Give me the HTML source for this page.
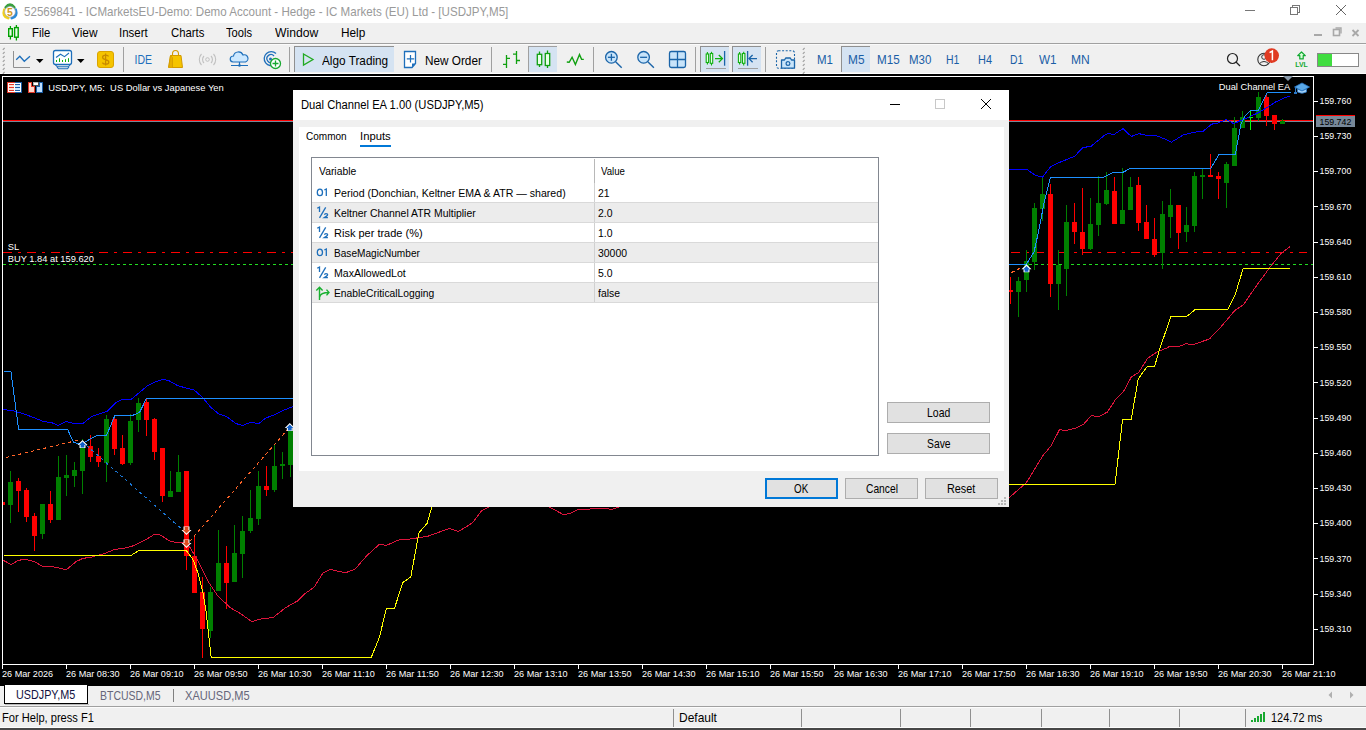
<!DOCTYPE html>
<html><head><meta charset="utf-8"><title>MT5</title>
<style>
html,body{margin:0;padding:0}
body{width:1366px;height:730px;overflow:hidden;position:relative;background:#f0f0f0;font-family:"Liberation Sans", sans-serif}
.t{position:absolute;white-space:pre;line-height:1;font-family:"Liberation Sans", sans-serif}
</style></head><body>
<div style="position:absolute;left:0;top:0;width:1366px;height:23px;background:#fff"></div>
<svg style="position:absolute;left:0px;top:0px" width="22" height="22" viewBox="0 0 22 22">
<path d="M6 7.5 Q10 2 14 7.5" fill="none" stroke="#3aa040" stroke-width="3.2" stroke-linecap="round"/>
<path d="M4.5 10 Q2.5 16.5 8 17.8" fill="none" stroke="#f0d020" stroke-width="3.2" stroke-linecap="round"/>
<path d="M15.5 10 Q17.5 16.5 12 17.8" fill="none" stroke="#2a8ad8" stroke-width="3.2" stroke-linecap="round"/>
<circle cx="10" cy="11.8" r="5.4" fill="#fff" stroke="#a0a0a0" stroke-width="0.7"/>
<text x="10" y="15.6" text-anchor="middle" font-family='"Liberation Sans", sans-serif' font-size="10.5" font-weight="bold" fill="#d49a18">5</text>
</svg>
<div class="t" style="left:23.60px;top:6.00px;font-size:12.46px;color:#9a9a9a;transform:scaleX(0.9297);transform-origin:0 0;">52569841 - ICMarketsEU-Demo: Demo Account - Hedge - IC Markets (EU) Ltd - [USDJPY,M5]</div>
<svg style="position:absolute;left:1240px;top:0" width="126" height="22" viewBox="1240 0 126 22" shape-rendering="crispEdges">
<rect x="1245" y="10" width="10" height="1" fill="#777"/>
<rect x="1290.5" y="7.5" width="7" height="7" fill="none" stroke="#777" stroke-width="1"/>
<path d="M1292.5 7.5 V5.5 H1299.5 V12.5 H1297.5" fill="none" stroke="#777" stroke-width="1"/>
</svg>
<svg style="position:absolute;left:1330px;top:0" width="22" height="22" viewBox="1330 0 22 22"><path d="M1336 5 L1346 15 M1346 5 L1336 15" stroke="#666" stroke-width="1"/></svg>
<div style="position:absolute;left:0;top:23px;width:1366px;height:20px;background:#f0f0f0"></div>
<div style="position:absolute;left:0;top:43px;width:1366px;height:1px;background:#a0a0a0"></div>
<div style="position:absolute;left:0;top:44px;width:1366px;height:1px;background:#fafafa"></div>
<svg style="position:absolute;left:0px;top:23px" width="24" height="20" viewBox="0 23 24 20">
<path d="M10.4 26 V39.5 M16.4 25 V40.5" stroke="#00a000" stroke-width="1.3"/>
<rect x="8.7" y="28.7" width="3.6" height="7.6" fill="#e8ffe8" stroke="#00a000" stroke-width="1.4"/>
<rect x="14.6" y="27.6" width="3.6" height="9.6" fill="#e8ffe8" stroke="#00a000" stroke-width="1.4"/>
</svg>
<div class="t" style="left:32.20px;top:27.00px;font-size:12.32px;color:#000;transform:scaleX(0.9176);transform-origin:0 0;">File</div>
<div class="t" style="left:71.70px;top:27.00px;font-size:12.32px;color:#000;transform:scaleX(0.9628);transform-origin:0 0;">View</div>
<div class="t" style="left:119.20px;top:27.00px;font-size:12.32px;color:#000;transform:scaleX(0.9319);transform-origin:0 0;">Insert</div>
<div class="t" style="left:170.70px;top:27.00px;font-size:12.32px;color:#000;transform:scaleX(0.9206);transform-origin:0 0;">Charts</div>
<div class="t" style="left:226.40px;top:27.00px;font-size:12.32px;color:#000;transform:scaleX(0.9039);transform-origin:0 0;">Tools</div>
<div class="t" style="left:275.30px;top:27.00px;font-size:12.32px;color:#000;transform:scaleX(0.9873);transform-origin:0 0;">Window</div>
<div class="t" style="left:341.10px;top:27.00px;font-size:12.32px;color:#000;transform:scaleX(0.9599);transform-origin:0 0;">Help</div>
<svg style="position:absolute;left:1310px;top:24px" width="56" height="18" viewBox="1310 24 56 18">
<rect x="1314" y="34" width="8" height="2" fill="#a8a8a8"/>
<rect x="1333.5" y="29.5" width="6" height="6" fill="none" stroke="#a8a8a8" stroke-width="1.6"/>
<path d="M1335.5 28 H1341 V33.5" fill="none" stroke="#a8a8a8" stroke-width="1.4"/>
<path d="M1352.5 30 L1358.5 36 M1358.5 30 L1352.5 36" stroke="#a8a8a8" stroke-width="1.8"/>
</svg>
<div style="position:absolute;left:0;top:45px;width:1366px;height:28px;background:#f0f0f0"></div>
<div style="position:absolute;left:0;top:73px;width:1366px;height:1px;background:#ffffff"></div>
<svg style="position:absolute;left:0;top:44px" width="1366" height="30" viewBox="0 44 1366 30">
<path d="M2.8 49.8 l1.8 -1.8" stroke="#a0a0a0" stroke-width="1.1"/>
<path d="M2.8 53.8 l1.8 -1.8" stroke="#a0a0a0" stroke-width="1.1"/>
<path d="M2.8 57.8 l1.8 -1.8" stroke="#a0a0a0" stroke-width="1.1"/>
<path d="M2.8 61.8 l1.8 -1.8" stroke="#a0a0a0" stroke-width="1.1"/>
<path d="M2.8 65.8 l1.8 -1.8" stroke="#a0a0a0" stroke-width="1.1"/>
<path d="M2.8 69.8 l1.8 -1.8" stroke="#a0a0a0" stroke-width="1.1"/>
<path d="M2.8 73.8 l1.8 -1.8" stroke="#a0a0a0" stroke-width="1.1"/>
<path d="M802.8 49.8 l1.8 -1.8" stroke="#a0a0a0" stroke-width="1.1"/>
<path d="M802.8 53.8 l1.8 -1.8" stroke="#a0a0a0" stroke-width="1.1"/>
<path d="M802.8 57.8 l1.8 -1.8" stroke="#a0a0a0" stroke-width="1.1"/>
<path d="M802.8 61.8 l1.8 -1.8" stroke="#a0a0a0" stroke-width="1.1"/>
<path d="M802.8 65.8 l1.8 -1.8" stroke="#a0a0a0" stroke-width="1.1"/>
<path d="M802.8 69.8 l1.8 -1.8" stroke="#a0a0a0" stroke-width="1.1"/>
<path d="M802.8 73.8 l1.8 -1.8" stroke="#a0a0a0" stroke-width="1.1"/>
<path d="M13.5 51 V67.5 H30" fill="none" stroke="#909090" stroke-width="1"/>
<path d="M16.2 59.7 L19.8 56.2 L24.3 61.3 L30 56.2" fill="none" stroke="#1e6fbb" stroke-width="1.3"/>
<path d="M36 59 h7.5 l-3.75 4 z" fill="#000"/>
<rect x="53.5" y="50.5" width="18" height="14" rx="2" fill="#fff" stroke="#1e6fbb" stroke-width="1.3"/>
<path d="M56 57.5 L60.5 54.2 L64.5 56.6 L69 53" fill="none" stroke="#1e6fbb" stroke-width="1.1"/>
<rect x="56.0" y="60.0" width="1" height="2.0" fill="#10b010"/>
<rect x="59.0" y="58.3" width="1" height="3.7" fill="#10b010"/>
<rect x="62.0" y="60.0" width="1" height="2.0" fill="#10b010"/>
<rect x="65.0" y="59.2" width="1" height="2.8" fill="#10b010"/>
<rect x="68.0" y="58.2" width="1" height="3.8" fill="#10b010"/>
<path d="M55.5 64.8 l1.8 2 h11 l1.8 -2 M57 67 l1.5 1.8 h9 l1.5 -1.8" fill="none" stroke="#1e6fbb" stroke-width="1.1"/>
<path d="M77 59 h7.5 l-3.75 4 z" fill="#000"/>
<rect x="97.5" y="51.5" width="16" height="16" rx="2.5" fill="#f5c400" stroke="#dba400" stroke-width="1"/>
<path d="M108.6 56.4 Q107.8 55 105.6 55 Q102.6 55 102.6 57.2 Q102.6 59 105.6 59.6 Q108.8 60.3 108.8 62.2 Q108.8 64.2 105.6 64.2 Q103.2 64.2 102.4 62.6 M105.6 53.6 V65.4" fill="none" stroke="#c88a00" stroke-width="1.25"/>
<rect x="123" y="47" width="1" height="25" fill="#a0a0a0"/>
<rect x="289" y="47" width="1" height="25" fill="#a0a0a0"/>
<rect x="491" y="47" width="1" height="25" fill="#a0a0a0"/>
<rect x="593" y="47" width="1" height="25" fill="#a0a0a0"/>
<rect x="695" y="47" width="1" height="25" fill="#a0a0a0"/>
<rect x="765" y="47" width="1" height="25" fill="#a0a0a0"/>
<text x="134.5" y="64" font-family='"Liberation Sans", sans-serif' font-size="12" fill="#1e6fbb" textLength="17.5" lengthAdjust="spacingAndGlyphs">IDE</text>
<path d="M170.5 55.5 h10.5 l1.5 12 h-14 z" fill="#f5c400" stroke="#d39a00" stroke-width="1"/>
<path d="M168.8 67.5 l1.7 -12 l2 2 v10" fill="#e8b000" stroke="#d39a00" stroke-width="0.8"/>
<path d="M172.5 56 v-2 a3 3.5 0 0 1 6 0 v2" fill="none" stroke="#d39a00" stroke-width="1.1"/>
<circle cx="207.5" cy="59.5" r="1.8" fill="none" stroke="#c0c0c0" stroke-width="1"/>
<path d="M204 56 a5 5 0 0 0 0 7 M211 56 a5 5 0 0 1 0 7 M201.5 54 a8 8 0 0 0 0 11 M213.5 54 a8 8 0 0 1 0 11" fill="none" stroke="#c0c0c0" stroke-width="1.1"/>
<path d="M233 62 a3 3 0 0 1 0.5 -6 a5 5 0 0 1 9.5 -1 a3.5 3.5 0 0 1 2.5 7 z" fill="#cce8ff" stroke="#1e6fbb" stroke-width="1.2"/>
<path d="M231 65.5 h17 M239.5 62 v3.5" stroke="#1e6fbb" stroke-width="1.2"/>
<circle cx="239.5" cy="65.5" r="1.3" fill="#1e6fbb"/>
<path d="M276 53.5 a7 7 0 1 0 -1 11 M274 56 a4 4 0 1 0 -1 6" fill="none" stroke="#1e6fbb" stroke-width="1.3"/>
<circle cx="270.5" cy="59" r="1.5" fill="#1e6fbb"/>
<circle cx="275.5" cy="63.5" r="5" fill="#fff" stroke="#18a830" stroke-width="1.3"/>
<path d="M272.5 63.5 h6 M275.5 60.5 v6" stroke="#18a830" stroke-width="1.3"/>
<rect x="294" y="46" width="100" height="26" fill="#d5e3f2"/>
<rect x="294" y="46" width="100" height="1" fill="#909090"/><rect x="294" y="46" width="1" height="26" fill="#909090"/>
<path d="M303.5 54 L313 59.5 L303.5 65 Z" fill="none" stroke="#22aa22" stroke-width="1.3"/>
<path d="M404.5 51.5 h11 v12 l-3.5 4 h-7.5 z" fill="#fff" stroke="#1e6fbb" stroke-width="1.3"/>
<path d="M412 67.5 l3.5 -4 h-3.5 z" fill="#1e6fbb"/>
<path d="M406.8 58.8 h7.4 M410.5 55.1 v7.4" stroke="#1e6fbb" stroke-width="1.2"/>
<path d="M506.5 55 V68 M503 64.4 H506.5 M506.5 58.3 H510 M516.5 51 V64 M513 54.2 H516.5 M516.5 60.5 H520" stroke="#10a010" stroke-width="1.3" fill="none"/>
<rect x="528" y="46" width="29" height="26" fill="#d5e3f2"/>
<rect x="528" y="46" width="29" height="1" fill="#a0a0a0"/><rect x="528" y="46" width="1" height="26" fill="#a0a0a0"/>
<path d="M539.5 51.5 V67 M547.5 50.5 V68" stroke="#10a010" stroke-width="1.3"/>
<rect x="537.3" y="54.3" width="4.4" height="10.4" fill="#e8ffe8" stroke="#10a010" stroke-width="1.3"/>
<rect x="545.3" y="53.5" width="4.4" height="12" fill="#e8ffe8" stroke="#10a010" stroke-width="1.3"/>
<path d="M566.8 62 L569.2 62.3 L572.1 57.2 L575.4 64.5 L579.5 54.6 L581.6 59.4 L583.8 59.4" fill="none" stroke="#10a010" stroke-width="1.4"/>
<circle cx="611.4" cy="57.3" r="5.8" fill="#c8e4fa" stroke="#1a64a8" stroke-width="1.3"/>
<path d="M615.6 61.8 L621.7 67.8" stroke="#1a64a8" stroke-width="1.4"/>
<path d="M607.9 57.3 h7" stroke="#1a64a8" stroke-width="1.3"/>
<path d="M611.4 53.8 v7" stroke="#1a64a8" stroke-width="1.3"/>
<circle cx="643.6" cy="57.3" r="5.8" fill="#c8e4fa" stroke="#1a64a8" stroke-width="1.3"/>
<path d="M647.8 61.8 L653.9 67.8" stroke="#1a64a8" stroke-width="1.4"/>
<path d="M640.1 57.3 h7" stroke="#1a64a8" stroke-width="1.3"/>
<rect x="669.5" y="51.5" width="16" height="16" rx="1.8" fill="#c8e4fa" stroke="#1a64a8" stroke-width="1.3"/>
<path d="M677.5 51.5 v16 M669.5 59.5 h16" stroke="#1a64a8" stroke-width="1.3"/>
<rect x="700" y="46" width="29" height="26" fill="#d5e3f2"/>
<rect x="700" y="46" width="29" height="1" fill="#909090"/><rect x="700" y="46" width="1" height="26" fill="#909090"/>
<rect x="706" y="68" width="20" height="1" fill="#a0a0a0"/>
<rect x="732" y="46" width="29" height="26" fill="#d5e3f2"/>
<rect x="732" y="46" width="29" height="1" fill="#909090"/><rect x="732" y="46" width="1" height="26" fill="#909090"/>
<rect x="738" y="68" width="20" height="1" fill="#a0a0a0"/>
<path d="M707.4 52.0 V64.5" stroke="#10b010" stroke-width="1.1"/><rect x="706.2" y="54.0" width="2.4" height="8.5" fill="#e8ffe8" stroke="#10b010" stroke-width="1.1"/><path d="M711.5 51.8 V65.5" stroke="#10b010" stroke-width="1.1"/><rect x="710.3" y="53.5" width="2.4" height="9.8" fill="#e8ffe8" stroke="#10b010" stroke-width="1.1"/>
<path d="M715 58.6 H723 M718.8 55 L722.4 58.6 L718.8 62.2" fill="none" stroke="#10b010" stroke-width="1.3"/><path d="M724.6 51 V65.7" stroke="#1a64a8" stroke-width="1.3"/>
<path d="M739.6 52.0 V64.5" stroke="#10b010" stroke-width="1.1"/><rect x="738.4" y="54.0" width="2.4" height="8.5" fill="#e8ffe8" stroke="#10b010" stroke-width="1.1"/><path d="M743.7 51.8 V65.5" stroke="#10b010" stroke-width="1.1"/><rect x="742.5" y="53.5" width="2.4" height="9.8" fill="#e8ffe8" stroke="#10b010" stroke-width="1.1"/>
<path d="M747.6 51 V65.7" stroke="#1a64a8" stroke-width="1.3"/><path d="M749 58.6 H757 M752.6 55 L749 58.6 L752.6 62.2" fill="none" stroke="#1a64a8" stroke-width="1.3"/>
<rect x="776.5" y="50.8" width="18" height="17.5" rx="2" fill="none" stroke="#1a64a8" stroke-width="1.1" stroke-dasharray="2 1.6"/>
<path d="M781.5 60 h3 l1.2 -2 h4.6 l1.2 2 h3 v8.2 h-13 z" fill="#c8e4fa" stroke="#1a64a8" stroke-width="1.3" stroke-linejoin="round"/><circle cx="788" cy="63.5" r="1.9" fill="none" stroke="#1a64a8" stroke-width="1.2"/>
<rect x="841" y="46" width="29" height="26" fill="#d5e3f2"/>
<rect x="841" y="46" width="29" height="1" fill="#909090"/><rect x="841" y="46" width="1" height="26" fill="#909090"/>
<circle cx="1232.5" cy="58.5" r="5" fill="none" stroke="#222" stroke-width="1.2"/><path d="M1236 62 L1240 66" stroke="#222" stroke-width="1.3"/>
<circle cx="1264" cy="59.5" r="6.2" fill="none" stroke="#333" stroke-width="1.1"/><circle cx="1264" cy="57" r="2.3" fill="none" stroke="#333" stroke-width="1"/><path d="M1259.5 63.5 q4.5 -4 9 0" fill="none" stroke="#333" stroke-width="1"/>
<circle cx="1271.7" cy="55.6" r="7.3" fill="#e03a22"/>
<path d="M1269.6 52.6 L1272.4 51 V60.2" fill="none" stroke="#fff" stroke-width="1.5"/>
<path d="M1301.5 52 l3.8 3.6 h-2.1 v3.3 h-3.4 v-3.3 h-2.1 z" fill="#d8ffd8" stroke="#10a830" stroke-width="1.2" stroke-linejoin="round"/>
<text x="1301.5" y="67" text-anchor="middle" font-family='"Liberation Sans", sans-serif' font-size="8" font-weight="bold" fill="#10a830" textLength="12.5" lengthAdjust="spacingAndGlyphs">LVL</text>
<rect x="1317.5" y="53.5" width="41" height="13" fill="#fff" stroke="#888" stroke-width="1"/>
<rect x="1318" y="54" width="14" height="12" fill="#40dd40"/>
</svg>
<div class="t" style="left:322.10px;top:55.00px;font-size:12.75px;color:#000;transform:scaleX(0.9244);transform-origin:0 0;">Algo Trading</div>
<div class="t" style="left:424.50px;top:55.00px;font-size:12.75px;color:#000;transform:scaleX(0.9227);transform-origin:0 0;">New Order</div>
<div class="t" style="left:816.50px;top:53.00px;font-size:13.04px;color:#1a5ea6;transform:scaleX(0.8825);transform-origin:0 0;">M1</div>
<div class="t" style="left:848.30px;top:53.00px;font-size:13.04px;color:#1a5ea6;transform:scaleX(0.9101);transform-origin:0 0;">M5</div>
<div class="t" style="left:877.30px;top:53.00px;font-size:13.04px;color:#1a5ea6;transform:scaleX(0.8948);transform-origin:0 0;">M15</div>
<div class="t" style="left:909.40px;top:53.00px;font-size:13.04px;color:#1a5ea6;transform:scaleX(0.8829);transform-origin:0 0;">M30</div>
<div class="t" style="left:945.60px;top:53.00px;font-size:13.04px;color:#1a5ea6;transform:scaleX(0.8026);transform-origin:0 0;">H1</div>
<div class="t" style="left:977.50px;top:53.00px;font-size:13.04px;color:#1a5ea6;transform:scaleX(0.8385);transform-origin:0 0;">H4</div>
<div class="t" style="left:1009.70px;top:53.00px;font-size:13.04px;color:#1a5ea6;transform:scaleX(0.7966);transform-origin:0 0;">D1</div>
<div class="t" style="left:1039.40px;top:53.00px;font-size:13.04px;color:#1a5ea6;transform:scaleX(0.8996);transform-origin:0 0;">W1</div>
<div class="t" style="left:1071.20px;top:53.00px;font-size:13.04px;color:#1a5ea6;transform:scaleX(0.9269);transform-origin:0 0;">MN</div>
<svg width="1366" height="612" viewBox="0 74 1366 612" style="position:absolute;left:0;top:74px">
<rect x="0" y="74" width="1366" height="612" fill="#000"/>
<rect x="3" y="120" width="1310" height="1" fill="#ff0000"/>
<rect x="3" y="121" width="1310" height="1" fill="#778899"/>
<line x1="3" y1="252.5" x2="1307" y2="252.5" stroke="#ff0000" stroke-width="1" stroke-dasharray="9 6 3 6"/>
<line x1="3" y1="264.5" x2="1313" y2="264.5" stroke="#22dd22" stroke-width="1" stroke-dasharray="3 3"/>
<defs><clipPath id="cp"><rect x="3" y="77" width="1310" height="587"/></clipPath></defs>
<g shape-rendering="crispEdges" clip-path="url(#cp)">
<rect x="2" y="502" width="1" height="3" fill="#ff0000"/>
<rect x="0" y="502" width="5" height="3" fill="#ff0000"/>
<rect x="10" y="471" width="1" height="52" fill="#008000"/>
<rect x="8" y="482" width="5" height="23" fill="#008000"/>
<rect x="18" y="478" width="1" height="34" fill="#ff0000"/>
<rect x="16" y="481" width="5" height="10" fill="#ff0000"/>
<rect x="26" y="488" width="1" height="34" fill="#ff0000"/>
<rect x="24" y="490" width="5" height="27" fill="#ff0000"/>
<rect x="34" y="513" width="1" height="38" fill="#ff0000"/>
<rect x="32" y="516" width="5" height="20" fill="#ff0000"/>
<rect x="42" y="504" width="1" height="35" fill="#008000"/>
<rect x="40" y="504" width="5" height="30" fill="#008000"/>
<rect x="50" y="491" width="1" height="32" fill="#ff0000"/>
<rect x="48" y="504" width="5" height="16" fill="#ff0000"/>
<rect x="58" y="456" width="1" height="64" fill="#008000"/>
<rect x="56" y="477" width="5" height="43" fill="#008000"/>
<rect x="66" y="455" width="1" height="41" fill="#008000"/>
<rect x="64" y="475" width="5" height="3" fill="#008000"/>
<rect x="74" y="462" width="1" height="25" fill="#008000"/>
<rect x="72" y="470" width="5" height="6" fill="#008000"/>
<rect x="82" y="439" width="1" height="55" fill="#008000"/>
<rect x="80" y="446" width="5" height="25" fill="#008000"/>
<rect x="90" y="435" width="1" height="27" fill="#ff0000"/>
<rect x="88" y="446" width="5" height="11" fill="#ff0000"/>
<rect x="98" y="448" width="1" height="19" fill="#ff0000"/>
<rect x="96" y="456" width="5" height="6" fill="#ff0000"/>
<rect x="106" y="415" width="1" height="67" fill="#008000"/>
<rect x="104" y="419" width="5" height="44" fill="#008000"/>
<rect x="114" y="415" width="1" height="40" fill="#ff0000"/>
<rect x="112" y="419" width="5" height="30" fill="#ff0000"/>
<rect x="122" y="435" width="1" height="30" fill="#ff0000"/>
<rect x="120" y="448" width="5" height="16" fill="#ff0000"/>
<rect x="130" y="414" width="1" height="51" fill="#008000"/>
<rect x="128" y="421" width="5" height="42" fill="#008000"/>
<rect x="138" y="398" width="1" height="34" fill="#008000"/>
<rect x="136" y="403" width="5" height="17" fill="#008000"/>
<rect x="146" y="399" width="1" height="37" fill="#ff0000"/>
<rect x="144" y="402" width="5" height="18" fill="#ff0000"/>
<rect x="154" y="418" width="1" height="42" fill="#ff0000"/>
<rect x="152" y="419" width="5" height="33" fill="#ff0000"/>
<rect x="162" y="448" width="1" height="54" fill="#ff0000"/>
<rect x="160" y="448" width="5" height="48" fill="#ff0000"/>
<rect x="170" y="471" width="1" height="26" fill="#008000"/>
<rect x="168" y="491" width="5" height="6" fill="#008000"/>
<rect x="178" y="455" width="1" height="37" fill="#008000"/>
<rect x="176" y="472" width="5" height="20" fill="#008000"/>
<rect x="186" y="471" width="1" height="99" fill="#ff0000"/>
<rect x="184" y="471" width="5" height="85" fill="#ff0000"/>
<rect x="194" y="536" width="1" height="57" fill="#ff0000"/>
<rect x="192" y="556" width="5" height="37" fill="#ff0000"/>
<rect x="202" y="577" width="1" height="81" fill="#ff0000"/>
<rect x="200" y="592" width="5" height="37" fill="#ff0000"/>
<rect x="210" y="587" width="1" height="51" fill="#008000"/>
<rect x="208" y="592" width="5" height="39" fill="#008000"/>
<rect x="218" y="530" width="1" height="61" fill="#008000"/>
<rect x="216" y="563" width="5" height="28" fill="#008000"/>
<rect x="226" y="546" width="1" height="63" fill="#ff0000"/>
<rect x="224" y="563" width="5" height="20" fill="#ff0000"/>
<rect x="234" y="525" width="1" height="57" fill="#008000"/>
<rect x="232" y="553" width="5" height="29" fill="#008000"/>
<rect x="242" y="516" width="1" height="62" fill="#008000"/>
<rect x="240" y="531" width="5" height="23" fill="#008000"/>
<rect x="250" y="490" width="1" height="43" fill="#008000"/>
<rect x="248" y="518" width="5" height="13" fill="#008000"/>
<rect x="258" y="471" width="1" height="54" fill="#008000"/>
<rect x="256" y="486" width="5" height="33" fill="#008000"/>
<rect x="266" y="466" width="1" height="30" fill="#ff0000"/>
<rect x="264" y="486" width="5" height="4" fill="#ff0000"/>
<rect x="274" y="445" width="1" height="47" fill="#008000"/>
<rect x="272" y="466" width="5" height="24" fill="#008000"/>
<rect x="282" y="452" width="1" height="27" fill="#008000"/>
<rect x="280" y="464" width="5" height="2" fill="#008000"/>
<rect x="290" y="424" width="1" height="53" fill="#008000"/>
<rect x="288" y="431" width="5" height="34" fill="#008000"/>
<rect x="1010" y="277" width="1" height="27" fill="#ff0000"/>
<rect x="1008" y="290" width="5" height="2" fill="#ff0000"/>
<rect x="1018" y="277" width="1" height="40" fill="#008000"/>
<rect x="1016" y="281" width="5" height="11" fill="#008000"/>
<rect x="1026" y="250" width="1" height="42" fill="#008000"/>
<rect x="1024" y="261" width="5" height="19" fill="#008000"/>
<rect x="1034" y="203" width="1" height="67" fill="#008000"/>
<rect x="1032" y="208" width="5" height="54" fill="#008000"/>
<rect x="1042" y="178" width="1" height="43" fill="#008000"/>
<rect x="1040" y="194" width="5" height="15" fill="#008000"/>
<rect x="1050" y="184" width="1" height="113" fill="#ff0000"/>
<rect x="1048" y="194" width="5" height="90" fill="#ff0000"/>
<rect x="1058" y="250" width="1" height="60" fill="#008000"/>
<rect x="1056" y="265" width="5" height="19" fill="#008000"/>
<rect x="1066" y="205" width="1" height="91" fill="#008000"/>
<rect x="1064" y="222" width="5" height="47" fill="#008000"/>
<rect x="1074" y="203" width="1" height="41" fill="#ff0000"/>
<rect x="1072" y="222" width="5" height="10" fill="#ff0000"/>
<rect x="1082" y="188" width="1" height="67" fill="#ff0000"/>
<rect x="1080" y="232" width="5" height="17" fill="#ff0000"/>
<rect x="1090" y="198" width="1" height="52" fill="#008000"/>
<rect x="1088" y="224" width="5" height="25" fill="#008000"/>
<rect x="1098" y="176" width="1" height="60" fill="#008000"/>
<rect x="1096" y="203" width="5" height="22" fill="#008000"/>
<rect x="1106" y="172" width="1" height="33" fill="#008000"/>
<rect x="1104" y="190" width="5" height="14" fill="#008000"/>
<rect x="1114" y="177" width="1" height="47" fill="#ff0000"/>
<rect x="1112" y="191" width="5" height="33" fill="#ff0000"/>
<rect x="1122" y="168" width="1" height="56" fill="#008000"/>
<rect x="1120" y="210" width="5" height="14" fill="#008000"/>
<rect x="1130" y="177" width="1" height="33" fill="#008000"/>
<rect x="1128" y="187" width="5" height="23" fill="#008000"/>
<rect x="1138" y="177" width="1" height="54" fill="#ff0000"/>
<rect x="1136" y="185" width="5" height="38" fill="#ff0000"/>
<rect x="1146" y="205" width="1" height="34" fill="#ff0000"/>
<rect x="1144" y="222" width="5" height="17" fill="#ff0000"/>
<rect x="1154" y="218" width="1" height="39" fill="#ff0000"/>
<rect x="1152" y="239" width="5" height="16" fill="#ff0000"/>
<rect x="1162" y="201" width="1" height="68" fill="#008000"/>
<rect x="1160" y="214" width="5" height="39" fill="#008000"/>
<rect x="1170" y="189" width="1" height="49" fill="#008000"/>
<rect x="1168" y="205" width="5" height="12" fill="#008000"/>
<rect x="1178" y="205" width="1" height="44" fill="#ff0000"/>
<rect x="1176" y="205" width="5" height="28" fill="#ff0000"/>
<rect x="1186" y="207" width="1" height="35" fill="#008000"/>
<rect x="1184" y="225" width="5" height="7" fill="#008000"/>
<rect x="1194" y="172" width="1" height="60" fill="#008000"/>
<rect x="1192" y="176" width="5" height="50" fill="#008000"/>
<rect x="1202" y="169" width="1" height="30" fill="#008000"/>
<rect x="1200" y="175" width="5" height="2" fill="#008000"/>
<rect x="1210" y="154" width="1" height="23" fill="#ff0000"/>
<rect x="1208" y="175" width="5" height="2" fill="#ff0000"/>
<rect x="1218" y="172" width="1" height="27" fill="#ff0000"/>
<rect x="1216" y="176" width="5" height="3" fill="#ff0000"/>
<rect x="1226" y="162" width="1" height="46" fill="#008000"/>
<rect x="1224" y="164" width="5" height="19" fill="#008000"/>
<rect x="1234" y="117" width="1" height="49" fill="#008000"/>
<rect x="1232" y="128" width="5" height="38" fill="#008000"/>
<rect x="1242" y="111" width="1" height="17" fill="#008000"/>
<rect x="1240" y="117" width="5" height="11" fill="#008000"/>
<rect x="1250" y="110" width="1" height="20" fill="#00ff00"/>
<rect x="1248" y="117" width="5" height="1" fill="#00ff00"/>
<rect x="1258" y="92" width="1" height="29" fill="#008000"/>
<rect x="1256" y="97" width="5" height="21" fill="#008000"/>
<rect x="1266" y="93" width="1" height="33" fill="#ff0000"/>
<rect x="1264" y="97" width="5" height="19" fill="#ff0000"/>
<rect x="1274" y="115" width="1" height="15" fill="#ff0000"/>
<rect x="1272" y="115" width="5" height="9" fill="#ff0000"/>
<rect x="1282" y="119" width="1" height="5" fill="#008000"/>
<rect x="1280" y="121" width="5" height="3" fill="#008000"/>
</g>
<polyline fill="none" stroke="#dc143c" stroke-width="1" shape-rendering="crispEdges"  points="3.5,560.4 10.9,564.5 18.1,560.6 23.5,559.3 30.1,560.4 34.5,561.7 42.2,566.1 53.2,566.7 59.8,568.3 66.4,569.6 76.3,561.5 82.9,558.4 91.6,557.1 97.1,555.4 104.8,553.5 114.7,549.4 123.5,548.3 132.3,546.1 141.1,542.0 147.5,538.7 154.5,534.2 160.4,535.1 169.8,541.0 175.6,542.4 185.0,543.1 189.7,546.9 198.3,561.4 209.0,582.8 217.9,596.1 230.4,607.7 241.1,614.0 251.8,621.6 258.9,619.3 273.1,617.5 285.6,607.7 298.1,600.6 305.2,593.5 314.1,587.2 323.0,573.0 330.2,569.4 340.5,571.7 345.6,572.7 355.0,569.2 366.6,555.9 379.4,544.2 386.4,545.4 398.0,540.1 409.7,539.1 428.3,536.1 449.3,528.4 458.6,531.4 472.6,522.8 481.9,510.5 489.3,507.0 500.5,495.0 540.5,495.0 549.0,507.0 563.1,514.4 570.1,513.7 577.2,509.7 589.5,509.1 593.0,508.3 607.0,508.3 610.5,509.7 615.8,508.0 619.3,507.0 630.5,495.0 990.5,495.0 1000.5,505.0 1009.7,497.2 1026.5,482.5 1042.8,455.8 1050.9,446.0 1059.5,429.7 1065.6,430.6 1075.4,428.3 1083.5,424.3 1091.2,415.7 1098.7,416.6 1107.5,412.0 1115.0,400.3 1123.8,391.0 1131.3,377.0 1138.7,372.4 1147.6,358.4 1158.0,351.4 1165.5,348.6 1169.8,346.4 1179.1,346.4 1186.1,343.7 1193.1,344.6 1209.4,339.0 1221.1,326.7 1235.0,310.3 1243.2,305.0 1258.3,283.1 1270.0,267.3 1281.6,252.8 1289.8,246.8"/>
<polyline fill="none" stroke="#ffff00" stroke-width="1" shape-rendering="crispEdges"  points="3.5,555.4 131.2,555.4 138.9,550.4 186.2,550.4 193.0,559.6 198.3,573.9 202.8,591.7 206.3,613.0 211.1,657.2 371.3,657.2 379.4,637.4 386.4,608.3 394.5,608.3 402.7,582.7 410.8,576.9 419.0,532.6 427.2,523.3 431.8,507.0 435.5,495.0 1000.5,484.3 1009.5,484.3 1115.0,484.3 1122.6,419.2 1131.3,419.2 1138.2,378.9 1147.1,366.6 1154.5,366.6 1160.5,346.4 1171.0,316.6 1186.6,316.6 1195.0,309.7 1227.6,309.7 1235.0,295.2 1243.2,268.4 1289.8,268.4"/>
<polyline fill="none" stroke="#0000ff" stroke-width="1" shape-rendering="crispEdges"  points="3.5,409.4 13.7,411.0 22.5,413.5 32.3,417.0 43.3,421.5 52.1,422.8 58.1,425.6 66.4,421.5 74.1,423.5 82.9,423.5 91.6,416.5 107.0,411.3 115.8,402.8 122.4,399.3 131.2,399.3 140.5,391.6 147.5,385.8 155.7,381.7 163.3,379.3 168.6,380.5 178.0,385.8 187.4,388.3 194.4,390.2 202.5,397.5 210.8,407.4 219.0,414.1 226.0,416.2 235.4,423.3 242.4,425.6 250.6,422.3 258.8,423.5 265.8,418.0 275.2,414.5 284.6,409.8 292.8,406.6 300.5,403.0"/>
<polyline fill="none" stroke="#0000ff" stroke-width="1" shape-rendering="crispEdges"  points="1000.5,169.2 1009.9,169.2 1026.9,169.4 1035.1,175.2 1042.5,177.2 1050.7,166.5 1059.8,162.3 1074.6,156.3 1082.8,147.5 1091.0,146.4 1104.2,135.5 1107.5,133.6 1114.1,134.4 1123.1,128.6 1131.3,136.5 1138.7,133.6 1146.9,135.5 1156.0,135.5 1165.5,139.3 1171.2,142.3 1183.5,134.9 1193.4,132.4 1203.3,131.1 1211.5,124.2 1218.1,122.9 1226.3,119.6 1233.7,123.7 1242.7,119.6 1250.1,116.6 1259.2,112.2 1267.4,107.2 1275.6,102.0 1283.9,98.2 1290.5,95.7"/>
<polyline fill="none" stroke="#1e90ff" stroke-width="1" shape-rendering="crispEdges"  points="3.5,371.2 10.9,371.2 18.6,429.2 67.5,429.2 73.7,442.6 79.5,443.6 85.5,441.8 91.3,438.2 96.4,436.0 100.5,435.5 106.5,435.5 114.7,415.8 131.7,415.8 139.5,412.5 146.5,398.4 300.5,398.4"/>
<polyline fill="none" stroke="#1e90ff" stroke-width="1" shape-rendering="crispEdges"  points="1000.5,264.3 1026.3,264.3 1034.0,252.0 1038.4,232.3 1043.9,203.8 1050.5,177.5 1102.5,177.6 1114.1,172.2 1123.1,172.2 1130.5,168.4 1210.7,168.4 1218.9,154.5 1235.3,154.5 1241.1,123.7 1245.2,115.5 1250.1,111.0 1258.4,110.5 1267.4,92.4 1290.5,92.4"/>
<line x1="6" y1="457.5" x2="81" y2="439.5" stroke="#ff6428" stroke-width="1" stroke-dasharray="3.2 3.2" shape-rendering="crispEdges"/>
<line x1="86.5" y1="445.5" x2="184.5" y2="531.5" stroke="#1a78d8" stroke-width="1" stroke-dasharray="3.2 3.2" shape-rendering="crispEdges"/>
<line x1="189.5" y1="541.5" x2="288.5" y2="428.5" stroke="#ff6428" stroke-width="1" stroke-dasharray="3.2 3.2" shape-rendering="crispEdges"/>
<line x1="1011.5" y1="272.5" x2="1023.5" y2="266.5" stroke="#ff6428" stroke-width="1" stroke-dasharray="3.2 3.2" shape-rendering="crispEdges"/>
<path d="M82.5 440.0 l5 5 h-2 v3 h-6 v-3 h-2 z" fill="#fff"/><path d="M82.5 441.6 l3.5 3.5 h-1.6 v2.4 h-3.8 v-2.4 h-1.6 z" fill="#1060c8"/>
<path d="M289.8 423.0 l5 5 h-2 v3 h-6 v-3 h-2 z" fill="#fff"/><path d="M289.8 424.6 l3.5 3.5 h-1.6 v2.4 h-3.8 v-2.4 h-1.6 z" fill="#1060c8"/>
<path d="M186.5 535.0 l5 -5 h-2 v-3.5 h-6 v3.5 h-2 z" fill="#fff"/><path d="M186.5 533.4 l3.5 -3.5 h-1.6 v-3 h-3.8 v3 h-1.6 z" fill="#e04a20"/>
<path d="M186.5 548.0 l5 -5 h-2 v-3.5 h-6 v3.5 h-2 z" fill="#fff"/><path d="M186.5 546.4 l3.5 -3.5 h-1.6 v-3 h-3.8 v3 h-1.6 z" fill="#e04a20"/>
<path d="M1026.5 264.3 l5 5 h-2 v3 h-6 v-3 h-2 z" fill="#fff"/><path d="M1026.5 265.9 l3.5 3.5 h-1.6 v2.4 h-3.8 v-2.4 h-1.6 z" fill="#1060c8"/>
<g shape-rendering="crispEdges" fill="#ffffff">
<rect x="2" y="76" width="1312" height="1"/>
<rect x="2" y="76" width="1" height="589"/>
<rect x="1313" y="76" width="1" height="589"/>
<rect x="2" y="664" width="1312" height="1"/>
<rect x="1314" y="101" width="4" height="1"/>
<rect x="1314" y="136" width="4" height="1"/>
<rect x="1314" y="171" width="4" height="1"/>
<rect x="1314" y="206" width="4" height="1"/>
<rect x="1314" y="242" width="4" height="1"/>
<rect x="1314" y="277" width="4" height="1"/>
<rect x="1314" y="312" width="4" height="1"/>
<rect x="1314" y="347" width="4" height="1"/>
<rect x="1314" y="382" width="4" height="1"/>
<rect x="1314" y="418" width="4" height="1"/>
<rect x="1314" y="453" width="4" height="1"/>
<rect x="1314" y="488" width="4" height="1"/>
<rect x="1314" y="523" width="4" height="1"/>
<rect x="1314" y="558" width="4" height="1"/>
<rect x="1314" y="594" width="4" height="1"/>
<rect x="1314" y="629" width="4" height="1"/>
<rect x="2" y="665" width="1" height="4"/>
<rect x="66" y="665" width="1" height="4"/>
<rect x="130" y="665" width="1" height="4"/>
<rect x="194" y="665" width="1" height="4"/>
<rect x="258" y="665" width="1" height="4"/>
<rect x="322" y="665" width="1" height="4"/>
<rect x="386" y="665" width="1" height="4"/>
<rect x="450" y="665" width="1" height="4"/>
<rect x="514" y="665" width="1" height="4"/>
<rect x="578" y="665" width="1" height="4"/>
<rect x="642" y="665" width="1" height="4"/>
<rect x="706" y="665" width="1" height="4"/>
<rect x="770" y="665" width="1" height="4"/>
<rect x="834" y="665" width="1" height="4"/>
<rect x="898" y="665" width="1" height="4"/>
<rect x="962" y="665" width="1" height="4"/>
<rect x="1026" y="665" width="1" height="4"/>
<rect x="1090" y="665" width="1" height="4"/>
<rect x="1154" y="665" width="1" height="4"/>
<rect x="1218" y="665" width="1" height="4"/>
<rect x="1282" y="665" width="1" height="4"/>
</g>
<g font-family='"Liberation Sans", sans-serif' font-size="8.8" fill="#fff">
<text x="1319.5" y="104.0">159.760</text>
<text x="1319.5" y="139.2">159.730</text>
<text x="1319.5" y="174.4">159.700</text>
<text x="1319.5" y="209.6">159.670</text>
<text x="1319.5" y="244.8">159.640</text>
<text x="1319.5" y="280.0">159.610</text>
<text x="1319.5" y="315.2">159.580</text>
<text x="1319.5" y="350.4">159.550</text>
<text x="1319.5" y="385.6">159.520</text>
<text x="1319.5" y="420.8">159.490</text>
<text x="1319.5" y="456.0">159.460</text>
<text x="1319.5" y="491.2">159.430</text>
<text x="1319.5" y="526.4">159.400</text>
<text x="1319.5" y="561.6">159.370</text>
<text x="1319.5" y="596.8">159.340</text>
<text x="1319.5" y="632.0">159.310</text>
<text x="2" y="676.8" font-size="9.1">26 Mar 2026</text>
<text x="66" y="676.8" font-size="9.1">26 Mar 08:30</text>
<text x="130" y="676.8" font-size="9.1">26 Mar 09:10</text>
<text x="194" y="676.8" font-size="9.1">26 Mar 09:50</text>
<text x="258" y="676.8" font-size="9.1">26 Mar 10:30</text>
<text x="322" y="676.8" font-size="9.1">26 Mar 11:10</text>
<text x="386" y="676.8" font-size="9.1">26 Mar 11:50</text>
<text x="450" y="676.8" font-size="9.1">26 Mar 12:30</text>
<text x="514" y="676.8" font-size="9.1">26 Mar 13:10</text>
<text x="578" y="676.8" font-size="9.1">26 Mar 13:50</text>
<text x="642" y="676.8" font-size="9.1">26 Mar 14:30</text>
<text x="706" y="676.8" font-size="9.1">26 Mar 15:10</text>
<text x="770" y="676.8" font-size="9.1">26 Mar 15:50</text>
<text x="834" y="676.8" font-size="9.1">26 Mar 16:30</text>
<text x="898" y="676.8" font-size="9.1">26 Mar 17:10</text>
<text x="962" y="676.8" font-size="9.1">26 Mar 17:50</text>
<text x="1026" y="676.8" font-size="9.1">26 Mar 18:30</text>
<text x="1090" y="676.8" font-size="9.1">26 Mar 19:10</text>
<text x="1154" y="676.8" font-size="9.1">26 Mar 19:50</text>
<text x="1218" y="676.8" font-size="9.1">26 Mar 20:30</text>
<text x="1282" y="676.8" font-size="9.1">26 Mar 21:10</text>
</g>
<rect x="1316" y="115" width="39" height="12" fill="#778899"/>
<rect x="1316" y="115" width="39" height="1" fill="#ff0000"/>
<text x="1319.5" y="124.5" font-family='"Liberation Sans", sans-serif' font-size="8.8" fill="#000">159.742</text>
<g font-family='"Liberation Sans", sans-serif' fill="#fff">
<text x="48.3" y="91" font-size="9.4" xml:space="preserve">USDJPY, M5:  US Dollar vs Japanese Yen</text>
<text x="7.8" y="250" font-size="9.3">SL</text>
<text x="7.8" y="261.6" font-size="9.3">BUY 1.84 at 159.620</text>
<text x="1218.8" y="90.4" font-size="9.3">Dual Channel EA</text>
</g>
<g shape-rendering="crispEdges">
<rect x="7" y="82" width="15" height="11" fill="#fff"/>
<rect x="7" y="82" width="8" height="1" fill="#e03a2a"/><rect x="7" y="92" width="8" height="1" fill="#e03a2a"/><rect x="7" y="82" width="1" height="11" fill="#e03a2a"/>
<rect x="15" y="82" width="7" height="1" fill="#1a5ea6"/><rect x="15" y="92" width="7" height="1" fill="#1a5ea6"/><rect x="21" y="82" width="1" height="11" fill="#1a5ea6"/>
<rect x="9" y="85" width="5" height="6" fill="#ffe0d4"/><rect x="15" y="85" width="5" height="6" fill="#cce8ff"/>
<rect x="9" y="84" width="5" height="1" fill="#e03a2a"/><rect x="15" y="84" width="5" height="1" fill="#1a5ea6"/>
<rect x="9" y="87" width="5" height="1" fill="#e03a2a"/><rect x="15" y="87" width="5" height="1" fill="#1a5ea6"/>
<rect x="9" y="90" width="5" height="1" fill="#e03a2a"/><rect x="15" y="90" width="5" height="1" fill="#1a5ea6"/>
<path d="M28.5 82.5 H31.5 V86.5 H34.5 V92.5 H28.5 Z" fill="#ffd8cc" stroke="#e03a2a" stroke-width="1"/>
<path d="M39.5 82.5 H42.5 V92.5 H36.5 V86.5 H39.5 Z" fill="#bfe0ff" stroke="#1a5ea6" stroke-width="1"/>
<rect x="33" y="82" width="5" height="3" fill="#fff" stroke="#808080" stroke-width="0.6"/>
</g>
<path d="M1294.5 87 L1302 83 L1309.5 87 L1302 91 Z" fill="#5aa8e8" stroke="#2a78c8" stroke-width="0.8"/>
<path d="M1297.5 89 v3 q4.5 2.5 9 0 v-3 l-4.5 2 z" fill="#a8d4f8" stroke="#2a78c8" stroke-width="0.8"/>
<rect x="1295" y="87" width="1" height="6" fill="#2a78c8"/><rect x="1294" y="92" width="3" height="2" fill="#2a78c8"/>
<path d="M1283 76 h10 l-5 5 z" fill="#8898a8"/>
</svg>
<div style="position:absolute;left:0;top:686px;width:1366px;height:20px;background:#f0f0f0"></div>
<div style="position:absolute;left:4px;top:685px;width:84px;height:19px;background:#fff;border:1px solid #000;border-top:none;box-sizing:border-box"></div>
<div style="position:absolute;left:5px;top:704px;width:84px;height:1px;background:#b8b8b8"></div>
<div class="t" style="left:16.40px;top:690.00px;font-size:11.88px;color:#101040;transform:scaleX(0.9082);transform-origin:0 0;">USDJPY,M5</div>
<div class="t" style="left:100.20px;top:691.00px;font-size:11.88px;color:#66667a;transform:scaleX(0.8822);transform-origin:0 0;">BTCUSD,M5</div>
<div style="position:absolute;left:173px;top:689px;width:1px;height:13px;background:#808080"></div>
<div class="t" style="left:185.10px;top:691.00px;font-size:11.88px;color:#66667a;transform:scaleX(0.9330);transform-origin:0 0;">XAUUSD,M5</div>
<svg style="position:absolute;left:1320px;top:688px" width="40" height="14" viewBox="1320 688 40 14"><path d="M1332 691.5 v7 l-3.5 -3.5 z" fill="#b0b0b0"/><path d="M1350 691.5 v7 l3.5 -3.5 z" fill="#b0b0b0"/></svg>
<div style="position:absolute;left:0;top:706px;width:1366px;height:1px;background:#a0a0a0"></div>
<div style="position:absolute;left:0;top:707px;width:1366px;height:21px;background:#f0f0f0"></div>
<div style="position:absolute;left:0;top:707px;width:1366px;height:1px;background:#fcfcfc"></div>
<div style="position:absolute;left:0;top:727px;width:1366px;height:1px;background:#fcfcfc"></div>
<div style="position:absolute;left:0;top:728px;width:1366px;height:2px;background:#474747"></div>
<div style="position:absolute;left:673px;top:709px;width:1px;height:18px;background:#909090"></div>
<div style="position:absolute;left:801px;top:709px;width:1px;height:18px;background:#909090"></div>
<div style="position:absolute;left:900px;top:709px;width:1px;height:18px;background:#909090"></div>
<div style="position:absolute;left:970px;top:709px;width:1px;height:18px;background:#909090"></div>
<div style="position:absolute;left:1041px;top:709px;width:1px;height:18px;background:#909090"></div>
<div style="position:absolute;left:1109px;top:709px;width:1px;height:18px;background:#909090"></div>
<div style="position:absolute;left:1179px;top:709px;width:1px;height:18px;background:#909090"></div>
<div style="position:absolute;left:1245px;top:709px;width:1px;height:18px;background:#909090"></div>
<div class="t" style="left:2.20px;top:713.00px;font-size:11.88px;color:#000;transform:scaleX(0.9350);transform-origin:0 0;">For Help, press F1</div>
<div class="t" style="left:679.00px;top:713.00px;font-size:11.88px;color:#000;transform:scaleX(1.0087);transform-origin:0 0;">Default</div>
<svg style="position:absolute;left:1250px;top:712px" width="18" height="12" viewBox="1250 712 18 12" shape-rendering="crispEdges"><rect x="1251" y="720" width="2" height="2" fill="#18a830"/><rect x="1254" y="718" width="2" height="4" fill="#18a830"/><rect x="1257" y="716" width="2" height="6" fill="#18a830"/><rect x="1260" y="714" width="2" height="8" fill="#18a830"/><rect x="1263" y="712" width="2" height="10" fill="#18a830"/></svg>
<div class="t" style="left:1271.40px;top:713.00px;font-size:11.88px;color:#000;transform:scaleX(0.9243);transform-origin:0 0;">124.72 ms</div>
<div style="position:absolute;left:293px;top:90px;width:716px;height:417px;background:#f0f0f0"></div>
<div style="position:absolute;left:293px;top:90px;width:716px;height:30px;background:#fff"></div>
<div class="t" style="left:301.00px;top:99.00px;font-size:12.61px;color:#000;transform:scaleX(0.8901);transform-origin:0 0;">Dual Channel EA 1.00 (USDJPY,M5)</div>
<svg style="position:absolute;left:880px;top:95px" width="120" height="20" viewBox="880 95 120 20">
<rect x="890" y="104" width="10" height="1" fill="#000"/>
<rect x="935.5" y="99.5" width="9" height="9" fill="none" stroke="#c8c8c8" stroke-width="1"/>
<path d="M981 99 L991 109 M991 99 L981 109" stroke="#000" stroke-width="1"/>
</svg>
<div style="position:absolute;left:299px;top:127px;width:705px;height:344px;background:#fff"></div>
<div class="t" style="left:306.40px;top:131.00px;font-size:11.16px;color:#000;transform:scaleX(0.8972);transform-origin:0 0;">Common</div>
<div class="t" style="left:359.70px;top:131.00px;font-size:11.16px;color:#000;transform:scaleX(1.0096);transform-origin:0 0;">Inputs</div>
<div style="position:absolute;left:360px;top:145px;width:31px;height:2px;background:#0078d7"></div>
<div style="position:absolute;left:311px;top:157px;width:568px;height:299px;border:1px solid #828790;box-sizing:border-box;background:#fff"></div>
<div style="position:absolute;left:594px;top:159px;width:1px;height:24px;background:#b8b8b8"></div>
<div class="t" style="left:318.60px;top:166.00px;font-size:11.59px;color:#000;transform:scaleX(0.8949);transform-origin:0 0;">Variable</div>
<div class="t" style="left:601.00px;top:166.00px;font-size:11.59px;color:#000;transform:scaleX(0.8330);transform-origin:0 0;">Value</div>
<div style="position:absolute;left:312px;top:183px;width:566px;height:19px;background:#ffffff"></div>
<div style="position:absolute;left:312px;top:202px;width:566px;height:1px;background:#d9d9d9"></div>
<div style="position:absolute;left:594px;top:183px;width:1px;height:19px;background:#d0d0d0"></div>
<div class="t" style="left:333.50px;top:188.00px;font-size:11.59px;color:#000;transform:scaleX(0.9145);transform-origin:0 0;">Period (Donchian, Keltner EMA &amp; ATR — shared)</div>
<div class="t" style="left:598.00px;top:188.00px;font-size:11.59px;color:#000;transform:scaleX(0.9000);transform-origin:0 0;">21</div>
<svg style="position:absolute;left:312px;top:183px" width="20" height="20" viewBox="0 0 20 20"><ellipse cx="7.9" cy="9.4" rx="2.6" ry="3.2" fill="none" stroke="#1e6fbb" stroke-width="1.3"/><path d="M12.3 7 L14.3 6 V13" fill="none" stroke="#1e6fbb" stroke-width="1.3"/></svg>
<div style="position:absolute;left:312px;top:203px;width:566px;height:19px;background:#ececec"></div>
<div style="position:absolute;left:312px;top:222px;width:566px;height:1px;background:#d9d9d9"></div>
<div style="position:absolute;left:594px;top:203px;width:1px;height:19px;background:#d0d0d0"></div>
<div class="t" style="left:333.50px;top:208.00px;font-size:11.59px;color:#000;transform:scaleX(0.9000);transform-origin:0 0;">Keltner Channel ATR Multiplier</div>
<div class="t" style="left:598.00px;top:208.00px;font-size:11.59px;color:#000;transform:scaleX(0.9000);transform-origin:0 0;">2.0</div>
<svg style="position:absolute;left:312px;top:203px" width="20" height="20" viewBox="0 0 20 20"><g fill="none" stroke="#1e6fbb" stroke-width="1.3"><path d="M5.2 5.3 L7.5 4 V9"/><path d="M7.5 14.8 L13.7 4.3"/><path d="M12.3 11.6 q1.4 -1.6 3 -0.6 q0.8 1.1 -0.7 2.1 l-2.3 1.5 h3.6"/></g></svg>
<div style="position:absolute;left:312px;top:223px;width:566px;height:19px;background:#ffffff"></div>
<div style="position:absolute;left:312px;top:242px;width:566px;height:1px;background:#d9d9d9"></div>
<div style="position:absolute;left:594px;top:223px;width:1px;height:19px;background:#d0d0d0"></div>
<div class="t" style="left:333.50px;top:228.00px;font-size:11.59px;color:#000;transform:scaleX(0.9502);transform-origin:0 0;">Risk per trade (%)</div>
<div class="t" style="left:598.00px;top:228.00px;font-size:11.59px;color:#000;transform:scaleX(0.9000);transform-origin:0 0;">1.0</div>
<svg style="position:absolute;left:312px;top:223px" width="20" height="20" viewBox="0 0 20 20"><g fill="none" stroke="#1e6fbb" stroke-width="1.3"><path d="M5.2 5.3 L7.5 4 V9"/><path d="M7.5 14.8 L13.7 4.3"/><path d="M12.3 11.6 q1.4 -1.6 3 -0.6 q0.8 1.1 -0.7 2.1 l-2.3 1.5 h3.6"/></g></svg>
<div style="position:absolute;left:312px;top:243px;width:566px;height:19px;background:#ececec"></div>
<div style="position:absolute;left:312px;top:262px;width:566px;height:1px;background:#d9d9d9"></div>
<div style="position:absolute;left:594px;top:243px;width:1px;height:19px;background:#d0d0d0"></div>
<div class="t" style="left:333.50px;top:248.00px;font-size:11.59px;color:#000;transform:scaleX(0.8721);transform-origin:0 0;">BaseMagicNumber</div>
<div class="t" style="left:598.00px;top:248.00px;font-size:11.59px;color:#000;transform:scaleX(0.9000);transform-origin:0 0;">30000</div>
<svg style="position:absolute;left:312px;top:243px" width="20" height="20" viewBox="0 0 20 20"><ellipse cx="7.9" cy="9.4" rx="2.6" ry="3.2" fill="none" stroke="#1e6fbb" stroke-width="1.3"/><path d="M12.3 7 L14.3 6 V13" fill="none" stroke="#1e6fbb" stroke-width="1.3"/></svg>
<div style="position:absolute;left:312px;top:263px;width:566px;height:19px;background:#ffffff"></div>
<div style="position:absolute;left:312px;top:282px;width:566px;height:1px;background:#d9d9d9"></div>
<div style="position:absolute;left:594px;top:263px;width:1px;height:19px;background:#d0d0d0"></div>
<div class="t" style="left:333.50px;top:268.00px;font-size:11.59px;color:#000;transform:scaleX(0.9147);transform-origin:0 0;">MaxAllowedLot</div>
<div class="t" style="left:598.00px;top:268.00px;font-size:11.59px;color:#000;transform:scaleX(0.9000);transform-origin:0 0;">5.0</div>
<svg style="position:absolute;left:312px;top:263px" width="20" height="20" viewBox="0 0 20 20"><g fill="none" stroke="#1e6fbb" stroke-width="1.3"><path d="M5.2 5.3 L7.5 4 V9"/><path d="M7.5 14.8 L13.7 4.3"/><path d="M12.3 11.6 q1.4 -1.6 3 -0.6 q0.8 1.1 -0.7 2.1 l-2.3 1.5 h3.6"/></g></svg>
<div style="position:absolute;left:312px;top:283px;width:566px;height:19px;background:#ececec"></div>
<div style="position:absolute;left:312px;top:302px;width:566px;height:1px;background:#d9d9d9"></div>
<div style="position:absolute;left:594px;top:283px;width:1px;height:19px;background:#d0d0d0"></div>
<div class="t" style="left:333.50px;top:288.00px;font-size:11.59px;color:#000;transform:scaleX(0.8900);transform-origin:0 0;">EnableCriticalLogging</div>
<div class="t" style="left:598.00px;top:288.00px;font-size:11.59px;color:#000;transform:scaleX(0.9000);transform-origin:0 0;">false</div>
<svg style="position:absolute;left:312px;top:283px" width="20" height="20" viewBox="0 0 20 20"><g fill="none" stroke="#18b030" stroke-width="1.4"><path d="M7.5 17 V4.5 M4.3 7.5 L7.5 4.3 L10.6 7.5"/><path d="M7.5 14 Q8.5 9.5 17 9.5 M14.5 6.6 L17 9.5 L14.5 12.4"/></g></svg>
<div style="position:absolute;left:887px;top:402px;width:103px;height:21px;background:#e1e1e1;border:1px solid #adadad;box-sizing:border-box"></div><div class="t" style="left:926.85px;top:408.00px;font-size:11.88px;color:#000;transform:scaleX(0.8812);transform-origin:0 0;">Load</div>
<div style="position:absolute;left:887px;top:433px;width:103px;height:21px;background:#e1e1e1;border:1px solid #adadad;box-sizing:border-box"></div><div class="t" style="left:926.70px;top:439.00px;font-size:11.88px;color:#000;transform:scaleX(0.8710);transform-origin:0 0;">Save</div>
<div style="position:absolute;left:765px;top:478px;width:73px;height:21px;background:#e1e1e1;border:2px solid #0078d7;box-sizing:border-box"></div><div class="t" style="left:794.40px;top:484.00px;font-size:11.88px;color:#000;transform:scaleX(0.8269);transform-origin:0 0;">OK</div>
<div style="position:absolute;left:845px;top:478px;width:73px;height:21px;background:#e1e1e1;border:1px solid #adadad;box-sizing:border-box"></div><div class="t" style="left:865.50px;top:484.00px;font-size:11.88px;color:#000;transform:scaleX(0.8644);transform-origin:0 0;">Cancel</div>
<div style="position:absolute;left:925px;top:478px;width:73px;height:21px;background:#e1e1e1;border:1px solid #adadad;box-sizing:border-box"></div><div class="t" style="left:947.35px;top:484.00px;font-size:11.88px;color:#000;transform:scaleX(0.9124);transform-origin:0 0;">Reset</div>
<svg style="position:absolute;left:996px;top:495px" width="12" height="12" viewBox="0 0 12 12"><rect x="8" y="2" width="2" height="2" fill="#b8b8b8"/><rect x="5" y="5" width="2" height="2" fill="#b8b8b8"/><rect x="8" y="5" width="2" height="2" fill="#b8b8b8"/><rect x="2" y="8" width="2" height="2" fill="#b8b8b8"/><rect x="5" y="8" width="2" height="2" fill="#b8b8b8"/><rect x="8" y="8" width="2" height="2" fill="#b8b8b8"/></svg>
</body></html>
